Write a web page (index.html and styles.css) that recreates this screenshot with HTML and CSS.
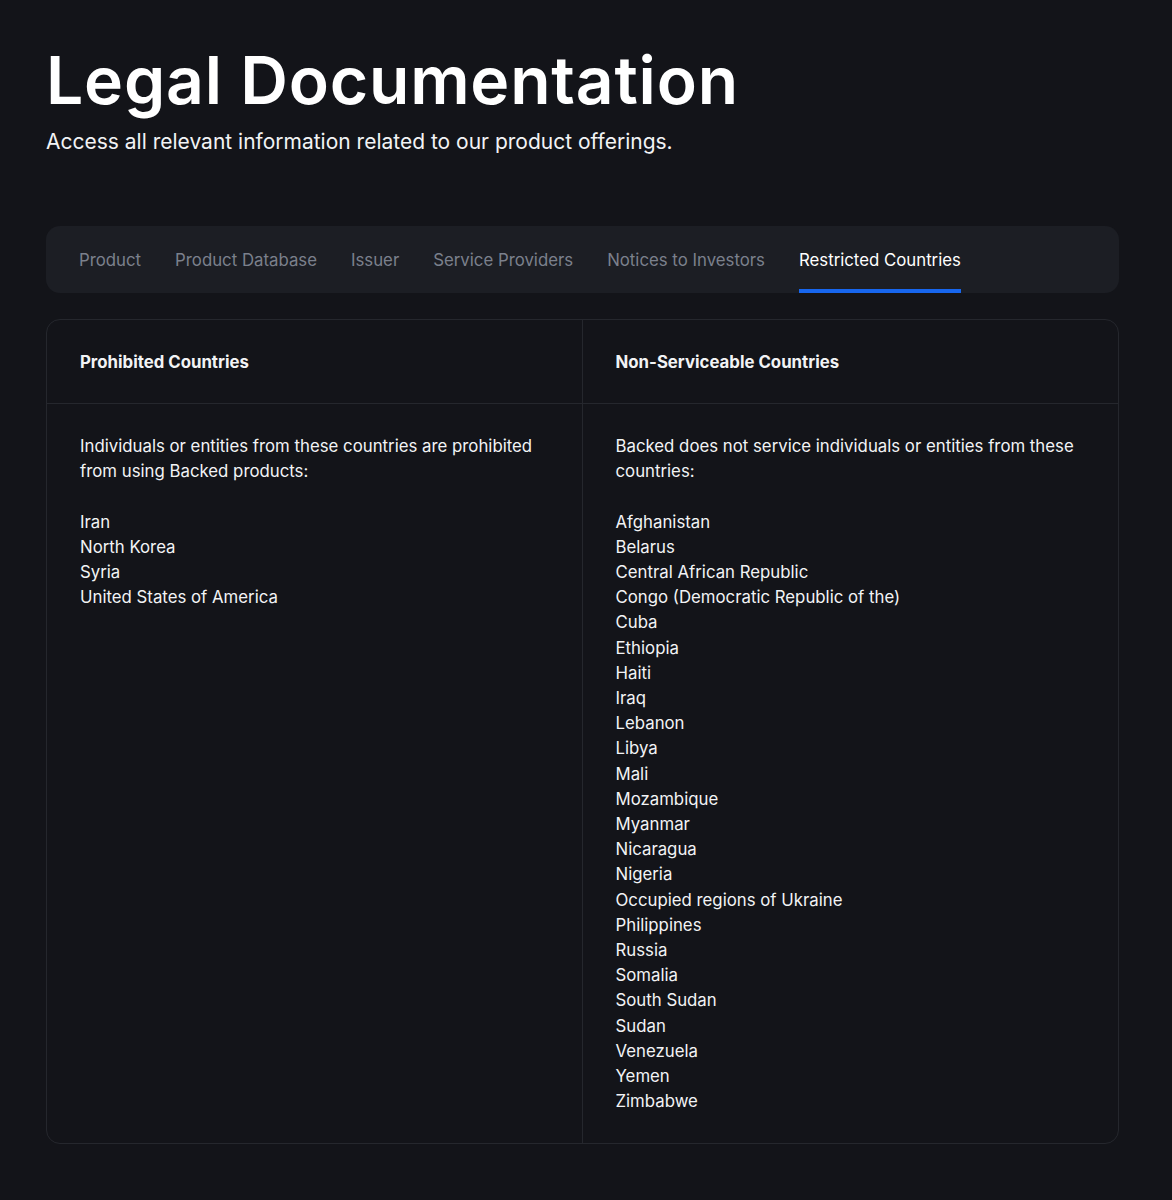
FILE: index.html
```html
<!DOCTYPE html>
<html lang="en">
<head>
    <meta charset="UTF-8">
    <meta name="viewport" content="width=device-width, initial-scale=1.0">
    <title>Legal Documentation</title>
    <link rel="stylesheet" href="styles.css">
</head>
<body>
    <div class="page">
        <header class="hero">
            <h1>Legal Documentation</h1>
            <p>Access all relevant information related to our product offerings.</p>
        </header>

        <nav class="tabs">
            <a class="tab" href="#">Product</a>
            <a class="tab" href="#">Product Database</a>
            <a class="tab" href="#">Issuer</a>
            <a class="tab" href="#">Service Providers</a>
            <a class="tab" href="#">Notices to Investors</a>
            <a class="tab active" href="#">Restricted Countries</a>
        </nav>

        <div class="countries">
            <div class="cell head">Prohibited Countries</div>
            <div class="cell head">Non-Serviceable Countries</div>
            <div class="cell">
                <p>Individuals or entities from these countries are prohibited from using Backed products:</p>
                <ul>
                    <li>Iran</li>
                    <li>North Korea</li>
                    <li>Syria</li>
                    <li>United States of America</li>
                </ul>
            </div>
            <div class="cell">
                <p>Backed does not service individuals or entities from these countries:</p>
                <ul>
                    <li>Afghanistan</li>
                    <li>Belarus</li>
                    <li>Central African Republic</li>
                    <li>Congo (Democratic Republic of the)</li>
                    <li>Cuba</li>
                    <li>Ethiopia</li>
                    <li>Haiti</li>
                    <li>Iraq</li>
                    <li>Lebanon</li>
                    <li>Libya</li>
                    <li>Mali</li>
                    <li>Mozambique</li>
                    <li>Myanmar</li>
                    <li>Nicaragua</li>
                    <li>Nigeria</li>
                    <li>Occupied regions of Ukraine</li>
                    <li>Philippines</li>
                    <li>Russia</li>
                    <li>Somalia</li>
                    <li>South Sudan</li>
                    <li>Sudan</li>
                    <li>Venezuela</li>
                    <li>Yemen</li>
                    <li>Zimbabwe</li>
                </ul>
            </div>
        </div>
    </div>
</body>
</html>
```

FILE: styles.css
```css
* {
    box-sizing: border-box;
}
body {
    margin: 0;
    background: #131419;
    color: #f2f3f5;
    font-family: Inter, "Noto Sans", sans-serif;
}
.page {
    padding: 40px 53px 56px 46px;
}

.hero h1 {
    margin: 0;
    font-family: Inter, sans-serif;
    font-size: 66px;
    font-weight: 600;
    line-height: 80px;
    letter-spacing: 0.8px;
    color: #ffffff;
}
.hero p {
    margin: 8px 0 0;
    font-size: 21px;
    line-height: 28px;
    color: #f2f3f5;
}

.tabs {
    display: flex;
    gap: 34px;
    margin-top: 70px;
    padding: 0 33px;
    height: 67px;
    background: #1c1e24;
    border-radius: 14px;
}
.tab {
    display: flex;
    align-items: center;
    font-size: 16.8px;
    color: #7b808c;
    text-decoration: none;
    border-bottom: 4px solid transparent;
    padding-top: 4px;
}
.tab.active {
    color: #ffffff;
    border-bottom-color: #1766ee;
}

.countries {
    display: grid;
    grid-template-columns: 1fr 1fr;
    margin-top: 26px;
    border: 1px solid #25272d;
    border-radius: 14px;
}
.cell {
    padding: 30px 33px 29px;
    font-size: 16.8px;
    line-height: 25.2px;
}
.cell:nth-child(odd) {
    border-right: 1px solid #25272d;
}
.cell.head {
    padding: 30px 33px 28px;
    font-weight: 700;
    border-bottom: 1px solid #25272d;
}
.cell p {
    margin: 0 0 25px;
}
.cell ul {
    margin: 0;
    padding: 0;
    list-style: none;
}
```
